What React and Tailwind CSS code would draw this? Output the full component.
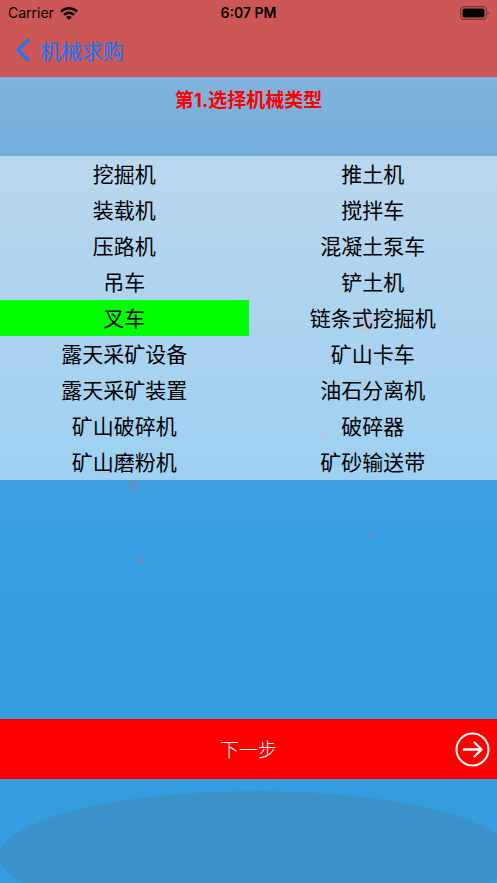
import { useState } from 'react';

const MACHINES = [
  '挖掘机', '推土机',
  '装载机', '搅拌车',
  '压路机', '混凝土泵车',
  '吊车', '铲土机',
  '叉车', '链条式挖掘机',
  '露天采矿设备', '矿山卡车',
  '露天采矿装置', '油石分离机',
  '矿山破碎机', '破碎器',
  '矿山磨粉机', '矿砂输送带',
];

// x, y, radius
const BUBBLES = [
  [366, 324, 9],
  [129, 406, 4],
  [195, 424, 2],
  [369, 411, 2],
  [322, 434, 4],
  [133, 485, 6],
  [370, 534, 3],
  [141, 561, 4],
];

function Backdrop() {
  return (
    <svg
      className="absolute inset-0 -z-10 w-full h-full"
      viewBox="0 0 497 883"
      preserveAspectRatio="none"
      aria-hidden="true"
    >
      <defs>
        <linearGradient id="sky" x1="0" y1="0" x2="0" y2="1">
          <stop offset="0.08" stopColor="#80b3db" />
          <stop offset="0.18" stopColor="#74afdc" />
          <stop offset="0.36" stopColor="#58a7df" />
          <stop offset="0.54" stopColor="#3ca1e3" />
          <stop offset="0.66" stopColor="#359de0" />
          <stop offset="1" stopColor="#339de0" />
        </linearGradient>
      </defs>
      <rect width="497" height="883" fill="url(#sky)" />
      {BUBBLES.map(([x, y, r]) => (
        <circle key={`${x}-${y}`} cx={x} cy={y} r={r} fill="#8f7a92" fillOpacity="0.35" />
      ))}
      <ellipse cx="256" cy="856" rx="256" ry="65" fill="#3b92c8" />
    </svg>
  );
}

function StatusBar() {
  return (
    <div className="grid grid-cols-3 items-center h-[26px] px-2 font-['Inter','Liberation_Sans',sans-serif] text-sm text-black">
      <div className="flex items-center gap-1.5">
        <span>Carrier</span>
        <svg className="w-[18px] h-[13px]" viewBox="0 0 18 13" fill="none" stroke="black" strokeWidth="2.4" aria-hidden="true">
          <path d="M1 4.6a11.4 11.4 0 0 1 16 0" />
          <path d="M4 7.8a7.1 7.1 0 0 1 10 0" />
          <path d="M9 13 6.2 10.2a4 4 0 0 1 5.6 0Z" fill="black" stroke="none" />
        </svg>
      </div>
      <span className="text-center font-semibold">6:07 PM</span>
      <svg className="w-[29px] h-[14px] justify-self-end" viewBox="0 0 29 14" aria-hidden="true">
        <rect x="0.6" y="0.6" width="25.8" height="12.8" rx="3.6" fill="none" stroke="black" strokeOpacity="0.4" strokeWidth="1.1" />
        <rect x="2.5" y="2.5" width="22" height="9" rx="2" />
        <path d="M27.6 5v4c1.5-.7 1.5-3.3 0-4Z" fillOpacity="0.5" />
      </svg>
    </div>
  );
}

export default function App() {
  const [selected, setSelected] = useState('叉车');

  return (
    <div className="relative isolate flex flex-col min-h-screen font-['Noto_Sans_CJK_SC',sans-serif]">
      <Backdrop />

      <header className="h-[77px] bg-[#cd5656]">
        <StatusBar />
        <button type="button" className="flex items-center gap-2.5 h-12 pl-4 text-[#0a7aff] text-[21px] leading-none">
          <svg className="w-3.5 h-6" viewBox="0 0 14 24" fill="none" stroke="currentColor" strokeWidth="3" strokeLinecap="round" strokeLinejoin="round" aria-hidden="true">
            <path d="M12 2 2 12l10 10" />
          </svg>
          机械求购
        </button>
      </header>

      <main className="flex flex-col flex-1">
        <h1 className="h-[79px] pt-2 text-center font-['Inter','Noto_Sans_CJK_SC',sans-serif] text-[19px] leading-8 font-bold text-[#ff0000]">
          第1.选择机械类型
        </h1>

        <div className="grid grid-cols-2 bg-white/50">
          {MACHINES.map((name) => (
            <button
              key={name}
              type="button"
              aria-pressed={selected === name}
              onClick={() => setSelected(name)}
              className={`h-9 pb-0.5 text-[21px] leading-8 text-black ${selected === name ? 'bg-[#00ff00]' : ''}`}
            >
              {name}
            </button>
          ))}
        </div>
      </main>

      <button
        type="button"
        className="grid grid-cols-[1fr_auto_1fr] items-center h-[60px] mb-[104px] px-[7px] bg-[#ff0000] text-white text-[19px] font-light"
      >
        <span className="col-start-2">下一步</span>
        <svg className="w-[35px] h-[35px] justify-self-end" viewBox="0 0 35 35" fill="none" stroke="currentColor" strokeWidth="2" aria-hidden="true">
          <circle cx="17.5" cy="17.5" r="16" />
          <path d="M9 17.5h17M19.5 10.5l7 7-7 7" strokeWidth="2.4" strokeLinecap="round" strokeLinejoin="round" />
        </svg>
      </button>
    </div>
  );
}
